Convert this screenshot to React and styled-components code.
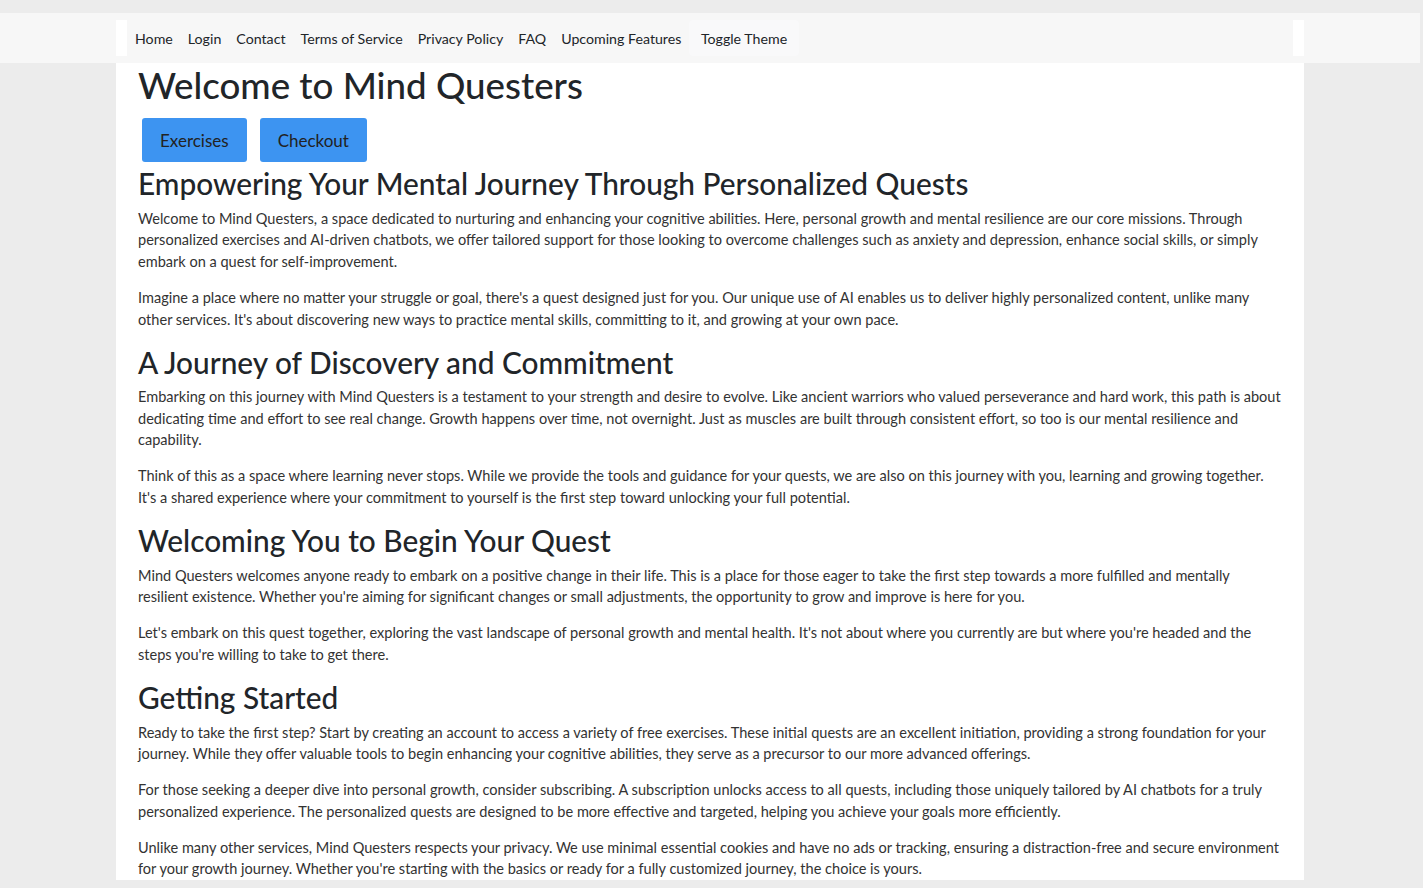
import React from 'react';
import styled, { createGlobalStyle } from 'styled-components';

const GlobalStyle = createGlobalStyle`
  html, body {
    margin: 0;
    padding: 0;
    background: #ececec;
  }
  body {
    font-family: 'Lato', 'Open Sans', sans-serif;
    color: #212529;
  }
  * {
    box-sizing: border-box;
  }
`;

// the original page was centred next to a scrollbar, so leave the same room on the right
const Page = styled.div`
  padding-right: 3px;
`;

const NavBar = styled.header`
  margin-top: 13px;
  height: 50px;
  background: #f7f7f7;
  display: flex;
  align-items: center;
`;

const NavShell = styled.div`
  width: 1188px;
  margin: 0 auto;
  height: 36px;
  background: #fff;
  padding: 0 11px;
`;

const NavList = styled.nav`
  height: 100%;
  background: #f7f7f7;
  display: flex;
  align-items: center;
`;

const NavLink = styled.a`
  padding: 0 7.5px;
  font-size: 14.2px;
  color: #212529;
  text-decoration: none;
  cursor: pointer;
  &:first-child {
    padding-left: 8px;
  }
`;

const ThemeButton = styled.button`
  height: 36px;
  padding: 0 12px;
  border: none;
  border-radius: 4px;
  background: #f9f9fa;
  font-family: inherit;
  font-size: 14.2px;
  color: #212529;
  cursor: pointer;
`;

const Main = styled.main`
  width: 1188px;
  margin: 0 auto;
  background: #fff;
  padding: 0 22px;
`;

const Title = styled.h1`
  margin: 0;
  font-size: 36.7px;
  font-weight: 500;
  line-height: 1.2;
`;

const ButtonRow = styled.div`
  display: flex;
  gap: 13px;
  padding: 11px 4px 4px;
`;

const ActionButton = styled.button`
  height: 44px;
  padding: 0 18px;
  border: none;
  border-radius: 3px;
  background: #3d94f1;
  font-family: inherit;
  font-size: 17px;
  color: #222;
  cursor: pointer;
`;

const Heading = styled.h2`
  margin: 0 0 6px;
  font-size: 29.8px;
  font-weight: 500;
  line-height: 1.2;
`;

const Section = styled.section``;

const Para = styled.p`
  margin: 0 0 14.4px;
  font-size: 14.55px;
  line-height: 21.6px;
  color: #333;
`;

const sections = [
  {
    title: 'Empowering Your Mental Journey Through Personalized Quests',
    paras: [
      'Welcome to Mind Questers, a space dedicated to nurturing and enhancing your cognitive abilities. Here, personal growth and mental resilience are our core missions. Through personalized exercises and AI-driven chatbots, we offer tailored support for those looking to overcome challenges such as anxiety and depression, enhance social skills, or simply embark on a quest for self-improvement.',
      "Imagine a place where no matter your struggle or goal, there's a quest designed just for you. Our unique use of AI enables us to deliver highly personalized content, unlike many other services. It's about discovering new ways to practice mental skills, committing to it, and growing at your own pace.",
    ],
  },
  {
    title: 'A Journey of Discovery and Commitment',
    paras: [
      'Embarking on this journey with Mind Questers is a testament to your strength and desire to evolve. Like ancient warriors who valued perseverance and hard work, this path is about dedicating time and effort to see real change. Growth happens over time, not overnight. Just as muscles are built through consistent effort, so too is our mental resilience and capability.',
      "Think of this as a space where learning never stops. While we provide the tools and guidance for your quests, we are also on this journey with you, learning and growing together. It's a shared experience where your commitment to yourself is the first step toward unlocking your full potential.",
    ],
  },
  {
    title: 'Welcoming You to Begin Your Quest',
    paras: [
      "Mind Questers welcomes anyone ready to embark on a positive change in their life. This is a place for those eager to take the first step towards a more fulfilled and mentally resilient existence. Whether you're aiming for significant changes or small adjustments, the opportunity to grow and improve is here for you.",
      "Let's embark on this quest together, exploring the vast landscape of personal growth and mental health. It's not about where you currently are but where you're headed and the steps you're willing to take to get there.",
    ],
  },
  {
    title: 'Getting Started',
    paras: [
      'Ready to take the first step? Start by creating an account to access a variety of free exercises. These initial quests are an excellent initiation, providing a strong foundation for your journey. While they offer valuable tools to begin enhancing your cognitive abilities, they serve as a precursor to our more advanced offerings.',
      'For those seeking a deeper dive into personal growth, consider subscribing. A subscription unlocks access to all quests, including those uniquely tailored by AI chatbots for a truly personalized experience. The personalized quests are designed to be more effective and targeted, helping you achieve your goals more efficiently.',
      "Unlike many other services, Mind Questers respects your privacy. We use minimal essential cookies and have no ads or tracking, ensuring a distraction-free and secure environment for your growth journey. Whether you're starting with the basics or ready for a fully customized journey, the choice is yours.",
    ],
  },
];

const navItems = ['Home', 'Login', 'Contact', 'Terms of Service', 'Privacy Policy', 'FAQ', 'Upcoming Features'];

export default function App() {
  return (
    <Page>
      <GlobalStyle />
      <NavBar>
        <NavShell>
          <NavList>
            {navItems.map((item) => (
              <NavLink key={item}>{item}</NavLink>
            ))}
            <ThemeButton>Toggle Theme</ThemeButton>
          </NavList>
        </NavShell>
      </NavBar>
      <Main>
        <Title>Welcome to Mind Questers</Title>
        <ButtonRow>
          <ActionButton>Exercises</ActionButton>
          <ActionButton>Checkout</ActionButton>
        </ButtonRow>
        {sections.map((s) => (
          <Section key={s.title}>
            <Heading>{s.title}</Heading>
            {s.paras.map((p, i) => (
              <Para key={i}>{p}</Para>
            ))}
          </Section>
        ))}
      </Main>
    </Page>
  );
}
